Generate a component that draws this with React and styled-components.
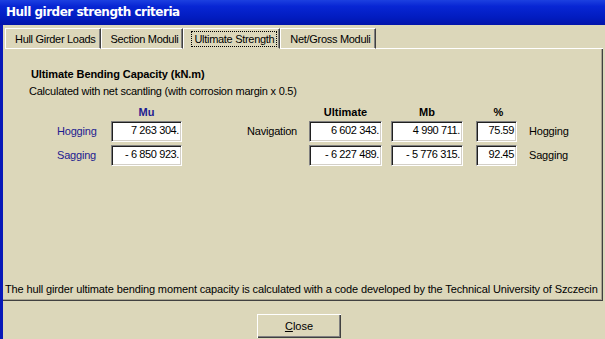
import React from 'react';
import styled, { createGlobalStyle } from 'styled-components';

const GlobalStyle = createGlobalStyle`
  html, body {
    margin: 0;
    padding: 0;
    background: #dcd7ba;
  }
  body {
    font-family: "Liberation Sans", Arial, sans-serif;
    font-size: 11px;
    color: #000;
  }
`;

const BG = '#dcd7ba';

const TABS = ['Hull Girder Loads', 'Section Moduli', 'Ultimate Strength', 'Net/Gross Moduli'];
const ACTIVE = 2;

const ROWS = [
  { label: 'Hogging', mu: '7 263 304.', ult: '6 602 343.', mb: '4 990 711.', pct: '75.59' },
  { label: 'Sagging', mu: '- 6 850 923.', ult: '- 6 227 489.', mb: '- 5 776 315.', pct: '92.45' },
];

export default function App() {
  return (
    <>
      <GlobalStyle />
      <Window>
        <TitleBar>Hull girder strength criteria</TitleBar>
        <Frame>
          <TabStrip>
            {TABS.map((t, i) => (
              <Tab key={t} $active={i === ACTIVE}>
                {i === ACTIVE ? <Focus>{t}</Focus> : t}
              </Tab>
            ))}
            <TabFill />
          </TabStrip>
          <Panel>
            <SectionTitle>Ultimate Bending Capacity (kN.m)</SectionTitle>
            <Note>Calculated with net scantling (with corrosion margin x 0.5)</Note>
            <Grid>
              <span />
              <ColHead $navy $w={71}>Mu</ColHead>
              <span />
              <ColHead $w={73}>Ultimate</ColHead>
              <ColHead $w={72}>Mb</ColHead>
              <ColHead $w={41} $shift={4}>%</ColHead>
              <span />
              {ROWS.map((r, i) => (
                <React.Fragment key={r.label}>
                  <RowLabel>{r.label}</RowLabel>
                  <Field $w={71}>{r.mu}</Field>
                  <NavLabel>{i === 0 ? 'Navigation' : ''}</NavLabel>
                  <Field $w={73}>{r.ult}</Field>
                  <Field $w={72}>{r.mb}</Field>
                  <Field $w={41}>{r.pct}</Field>
                  <SideLabel>{r.label}</SideLabel>
                </React.Fragment>
              ))}
            </Grid>
            <Footer>
              The hull girder ultimate bending moment capacity is calculated with a code developed by the Technical University of Szczecin
            </Footer>
          </Panel>
          <ButtonRow>
            <Button>
              <u>C</u>lose
            </Button>
          </ButtonRow>
        </Frame>
      </Window>
    </>
  );
}

const Window = styled.div`
  display: flex;
  flex-direction: column;
  width: 605px;
  height: 339px;
  overflow: hidden;
  background: ${BG};
`;

const TitleBar = styled.div`
  height: 25px;
  flex: none;
  display: flex;
  align-items: center;
  padding-left: 6px;
  padding-bottom: 1px;
  box-sizing: border-box;
  color: #fff;
  font-family: "DejaVu Sans", Verdana, sans-serif;
  font-weight: bold;
  font-size: 12px;
  letter-spacing: -0.5px;
  background: linear-gradient(180deg, #1c40e0 0%, #0826d4 25%, #021cc0 70%, #0214aa 100%);
`;

const Frame = styled.div`
  flex: 1;
  display: flex;
  flex-direction: column;
  border-left: 3px solid #0818b8;
  min-height: 0;
`;

const TabStrip = styled.div`
  display: flex;
  align-items: flex-end;
  height: 24px;
  padding-left: 2px;
  flex: none;
`;

const Tab = styled.div`
  height: 21px;
  box-sizing: border-box;
  display: flex;
  align-items: center;
  padding: 0 4px 0 9px;
  border-top: 1px solid #fff;
  border-left: 1px solid #fff;
  border-right: 1px solid #404040;
  box-shadow: inset -1px 0 0 #808080;
  border-bottom: ${(p) => (p.$active ? `1px solid ${BG}` : '1px solid #fff')};
  white-space: nowrap;
  letter-spacing: -0.3px;
`;

const TabFill = styled.div`
  flex: 1;
  border-bottom: 1px solid #fff;
  margin-right: 2px;
`;

const Focus = styled.span`
  outline: 1px dotted #000;
  outline-offset: 1px;
  padding: 0 1px;
`;

const Panel = styled.div`
  height: 252px;
  flex: none;
  box-sizing: border-box;
  margin-right: 2px;
  display: flex;
  flex-direction: column;
  padding: 18px 0 2px 26px;
  border-right: 1px solid #404040;
  border-bottom: 1px solid #404040;
  box-shadow: inset -1px -1px 0 #a8a490;
`;

const SectionTitle = styled.div`
  font-weight: bold;
  font-size: 11px;
  line-height: 14px;
  padding-left: 2px;
  letter-spacing: -0.1px;
`;

const Note = styled.div`
  line-height: 14px;
  margin-top: 3px;
  letter-spacing: -0.23px;
`;

const Grid = styled.div`
  display: grid;
  grid-template-columns: 82px 71px 127px 82px 85px 47px auto;
  grid-template-rows: 16px 24px 24px;
  align-items: center;
  margin-top: 5px;
`;

const ColHead = styled.div`
  width: ${(p) => p.$w}px;
  text-align: center;
  font-weight: bold;
  color: ${(p) => (p.$navy ? '#1c2090' : '#000')};
  padding-left: ${(p) => p.$shift || 0}px;
  box-sizing: border-box;
  align-self: end;
  padding-bottom: 1px;
`;

const RowLabel = styled.div`
  padding-left: 28px;
  color: #1c2090;
  letter-spacing: -0.2px;
`;

const NavLabel = styled.div`
  text-align: right;
  padding-right: 12px;
  letter-spacing: -0.2px;
`;

const SideLabel = styled.div`
  padding-left: 6px;
  letter-spacing: -0.2px;
`;

const Field = styled.div`
  width: ${(p) => p.$w}px;
  height: 21px;
  box-sizing: border-box;
  background: #fff;
  border-top: 1px solid #808080;
  border-left: 1px solid #808080;
  border-right: 1px solid #fff;
  border-bottom: 1px solid #fff;
  box-shadow: inset 1px 1px 0 #202020, inset -1px -1px 0 #d4d0c8;
  text-align: right;
  padding: 2px 2px 0 0;
  letter-spacing: -0.4px;
  white-space: nowrap;
`;

const Footer = styled.div`
  margin-top: auto;
  margin-left: -24px;
  line-height: 13px;
  margin-bottom: 2px;
  letter-spacing: -0.13px;
  white-space: nowrap;
`;

const ButtonRow = styled.div`
  flex: 1;
  display: flex;
  justify-content: center;
  align-items: flex-start;
  padding-top: 13px;
  padding-right: 10px;
`;

const Button = styled.button`
  width: 84px;
  height: 24px;
  font-family: "Liberation Sans", Arial, sans-serif;
  font-size: 11px;
  background: ${BG};
  border: none;
  padding: 0;
  color: #000;
  box-shadow: inset 1px 1px 0 #fff, inset -1px -1px 0 #404040, inset -2px -2px 0 #808080;
  u {
    text-decoration: underline;
  }
`;
